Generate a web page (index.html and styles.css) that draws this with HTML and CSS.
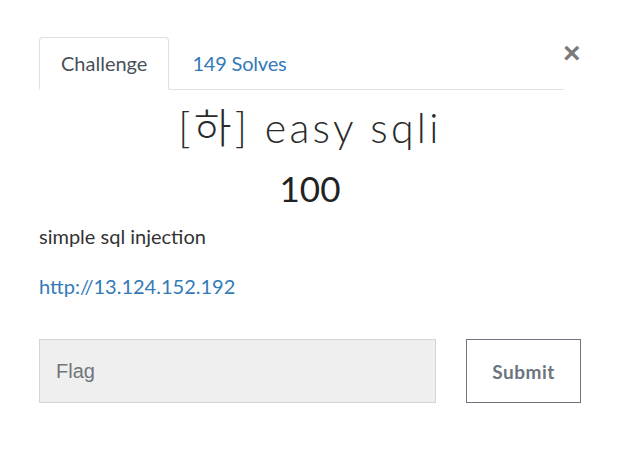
FILE: index.html
```html
<!DOCTYPE html>
<html>
<head>
<meta charset="utf-8">
<link rel="stylesheet" href="styles.css">
</head>
<body>
<div class="modal">
  <div class="head">
    <ul class="tabs">
      <li class="tab active">Challenge</li>
      <li class="tab link">149 Solves</li>
    </ul>
    <button class="close">×</button>
  </div>
  <h2 class="title">[하] easy sqli</h2>
  <h3 class="value">100</h3>
  <p class="desc">simple sql injection</p>
  <p class="url"><a href="#">http://13.124.152.192</a></p>
  <form class="flag-row">
    <input class="flag" type="text" placeholder="Flag">
    <button class="submit" type="button">Submit</button>
  </form>
</div>
</body>
</html>
```
FILE: styles.css
```css
html, body { margin: 0; padding: 0; background: #fff; }
body { font-family: Lato, "Noto Sans CJK KR", sans-serif; color: #333; }
.modal { padding: 37px 40px 0 39px; }
.head { display: flex; align-items: flex-start; }
.tabs { list-style: none; margin: 0; padding: 0; display: flex; width: 525px; border-bottom: 1px solid #dee2e6; }
.tab { font-size: 20px; line-height: 22px; padding: 14px 21px 15px; border: 1px solid transparent; border-top-left-radius: 4px; border-top-right-radius: 4px; margin-bottom: -1px; }
.tab.active { color: #495057; border-color: #dee2e6 #dee2e6 #fff; background: #fff; }
.tab.link { color: #337ab7; padding-left: 22px; letter-spacing: -0.2px; }
.close { background: none; border: 0; padding: 0; margin: 2px 0 0 -1px; font-family: "Liberation Sans", sans-serif; font-size: 30px; font-weight: 700; line-height: 28px; color: #7a7a7a; width: 14px; }
.title { text-align: center; margin: 14px 0 0; font-family: Lato, "Noto Sans CJK KR", sans-serif; font-weight: 300; font-size: 41px; line-height: 48px; letter-spacing: 3.3px; color: #2a2a2a; }
.value { text-align: center; margin: 15px 0 0; font-weight: 400; font-size: 35px; line-height: 42px; color: #222; }
.desc { margin: 13px 0 0; font-size: 20px; line-height: 28px; color: #333; }
.url { margin: 22px 0 0; font-size: 20px; line-height: 28px; }
.url a { color: #337ab7; text-decoration: none; }
.flag-row { display: flex; justify-content: space-between; margin-top: 39px; }
.flag { box-sizing: border-box; width: 397px; height: 64px; background: #efefef; border: 1px solid #d3d5da; padding: 0 16px; font-family: "Liberation Sans", Arial, sans-serif; font-size: 20px; color: #555; outline: none; margin: 0; }
.flag::placeholder { color: #70757b; }
.submit { box-sizing: border-box; width: 115px; height: 64px; background: #fff; border: 1px solid #6c757d; color: #6c757d; font-family: Lato, sans-serif; font-weight: 700; font-size: 19px; letter-spacing: .5px; margin: 0; }
```
